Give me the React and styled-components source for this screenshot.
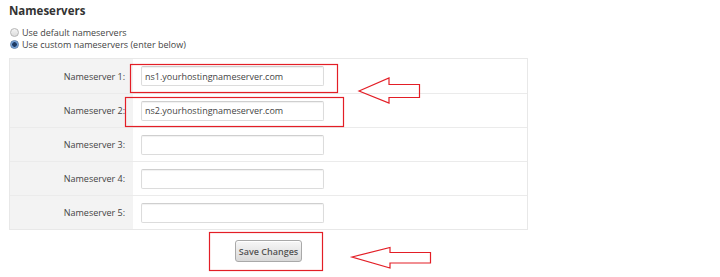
import React from 'react';
import styled, { createGlobalStyle } from 'styled-components';

const GlobalStyle = createGlobalStyle`
  body {
    margin: 0;
    background: #fff;
    font-family: "Open Sans", "Liberation Sans", sans-serif;
  }
`;

const Page = styled.div`
  position: relative;
  width: 720px;
  height: 277px;
  padding: 3px 9px 0;
  box-sizing: border-box;
  overflow: hidden;
`;

const Title = styled.h3`
  margin: 0;
  font-size: 11.5px;
  line-height: 16px;
  font-weight: 700;
  color: #333;
`;

const RadioGroup = styled.div`
  margin-top: 7px;
  display: flex;
  flex-direction: column;
`;

const RadioRow = styled.label`
  display: flex;
  align-items: center;
  gap: 3px;
  height: 12.5px;
  font-size: 9px;
  color: #444;
`;

const RadioDot = styled.span`
  width: 9px;
  height: 9px;
  margin-left: 1px;
  border-radius: 50%;
  box-sizing: border-box;
  border: 1px solid ${({ checked }) => (checked ? '#5d7fa8' : '#b5b5b5')};
  background: ${({ checked }) =>
    checked
      ? 'radial-gradient(circle, #1f3b63 0 2px, #5b8fd0 2.5px, #a9c8ee 4px)'
      : 'linear-gradient(#f4f4f4, #dcdcdc)'};
`;

const Table = styled.div`
  margin-top: 7px;
  width: 519px;
  border: 1px solid #e8e8e8;
  box-sizing: border-box;
`;

const Row = styled.div`
  display: flex;
  height: 34px;
  border-top: ${({ first }) => (first ? 'none' : '1px solid #ebebeb')};
  box-sizing: border-box;
`;

const Label = styled.div`
  width: 123px;
  flex-shrink: 0;
  background: #f3f3f3;
  display: flex;
  align-items: center;
  justify-content: flex-end;
  padding-right: 8px;
  box-sizing: border-box;
  font-size: 9px;
  color: #444;
`;

const Field = styled.div`
  flex: 1;
  display: flex;
  align-items: center;
  padding-left: 8px;
`;

const Input = styled.input`
  width: 183px;
  height: 20px;
  box-sizing: border-box;
  border: 1px solid #dcdcdc;
  border-top-color: #cfcfcf;
  border-radius: 2px;
  box-shadow: inset 0 1px 1px rgba(0, 0, 0, 0.06);
  padding: 0 3px;
  font-family: "Open Sans", "Liberation Sans", sans-serif;
  font-size: 9px;
  color: #444;
  outline: none;
`;

const Actions = styled.div`
  width: 519px;
  display: flex;
  justify-content: center;
  margin-top: 10px;
`;

const Button = styled.button`
  width: 67px;
  height: 22px;
  padding: 0;
  border: 1px solid #a9a9a9;
  border-radius: 3px;
  background: linear-gradient(#f7f7f7, #d9d9d9);
  box-shadow: inset 0 1px 0 #fff;
  font-family: "Open Sans", "Liberation Sans", sans-serif;
  font-size: 9px;
  font-weight: 600;
  color: #555;
`;

const Overlay = styled.svg`
  position: absolute;
  left: 0;
  top: 0;
  pointer-events: none;
`;

const servers = [
  'ns1.yourhostingnameserver.com',
  'ns2.yourhostingnameserver.com',
  '',
  '',
  '',
];

const RED = '#e31e26';

export default function App() {
  return (
    <Page>
      <GlobalStyle />
      <Title>Nameservers</Title>
      <RadioGroup>
        <RadioRow>
          <RadioDot />
          Use default nameservers
        </RadioRow>
        <RadioRow>
          <RadioDot checked />
          Use custom nameservers (enter below)
        </RadioRow>
      </RadioGroup>
      <Table>
        {servers.map((value, i) => (
          <Row key={i} first={i === 0}>
            <Label>Nameserver {i + 1}:</Label>
            <Field>
              <Input defaultValue={value} />
            </Field>
          </Row>
        ))}
      </Table>
      <Actions>
        <Button>Save Changes</Button>
      </Actions>
      <Overlay width="720" height="277" viewBox="0 0 720 277">
        <g fill="none" stroke={RED} strokeWidth="1.2">
          <rect x="130.5" y="64.5" width="207" height="28" />
          <rect x="125.5" y="97.5" width="218" height="29" />
          <rect x="209.5" y="232.5" width="113" height="38" />
          <polygon points="359,91 389,78 389,84.5 419.5,84.5 419.5,97.5 389,97.5 389,103" />
          <polygon points="352,257 390,247.5 390,252.5 430.5,252.5 430.5,263 390,263 390,268" />
        </g>
      </Overlay>
    </Page>
  );
}
